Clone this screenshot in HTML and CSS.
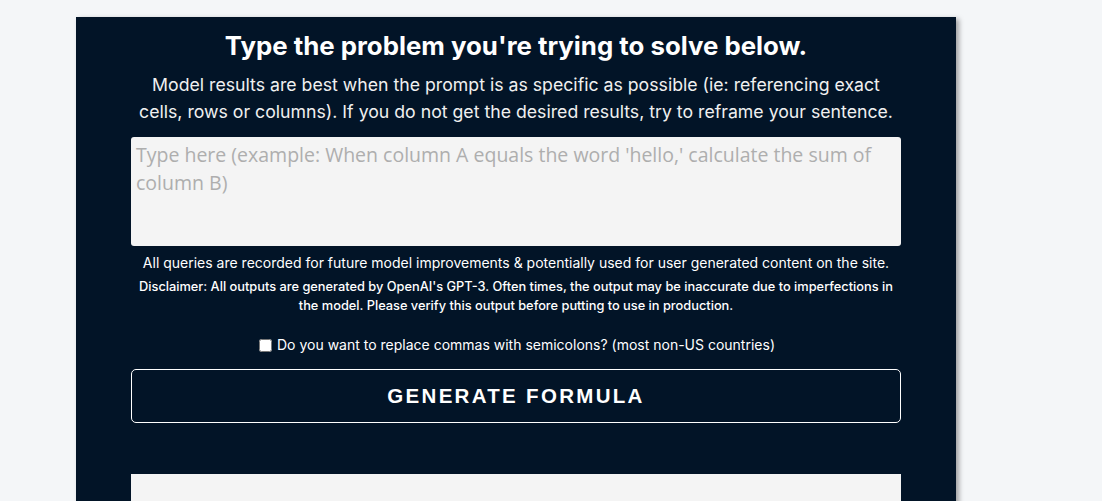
FILE: index.html
```html
<!DOCTYPE html>
<html>
<head>
<meta charset="utf-8">
<link rel="stylesheet" href="styles.css">
</head>
<body>
<main class="card">
  <h1 class="title">Type the problem you're trying to solve below.</h1>
  <p class="lead">Model results are best when the prompt is as specific as possible (ie: referencing exact cells, rows or columns). If you do not get the desired results, try to reframe your sentence.</p>
  <textarea class="prompt" placeholder="Type here (example: When column A equals the word 'hello,' calculate the sum of column B)"></textarea>
  <p class="note">All queries are recorded for future model improvements &amp; potentially used for user generated content on the site.</p>
  <p class="disclaimer">Disclaimer: All outputs are generated by OpenAI's GPT-3. Often times, the output may be inaccurate due to imperfections in the model. Please verify this output before putting to use in production.</p>
  <label class="check"><input type="checkbox" class="box"> Do you want to replace commas with semicolons? (most non-US countries)</label>
  <button class="generate">GENERATE FORMULA</button>
  <div class="output"></div>
</main>
</body>
</html>
```
FILE: styles.css
```css
html, body { margin: 0; padding: 0; }
body {
  background: #f4f6f8;
  font-family: "Inter", "Liberation Sans", sans-serif;
  height: 501px;
  overflow: hidden;
}
.card {
  margin: 17px 0 0 76px;
  width: 880px;
  height: 600px;
  box-sizing: border-box;
  padding: 14px 55px 0;
  background: #021427;
  color: #fff;
  box-shadow: 3px 2px 5px rgba(0,0,0,0.35);
  display: flex;
  flex-direction: column;
  align-items: center;
}
.title {
  margin: 0;
  font-size: 25.8px;
  font-weight: 700;
  line-height: 30px;
  text-align: center;
}
.lead {
  margin: 10px 0 0;
  max-width: 768px;
  font-size: 17.7px;
  line-height: 27px;
  text-align: center;
  color: #f0f0f0;
}
.prompt {
  margin-top: 12px;
  width: 770px;
  height: 109px;
  box-sizing: border-box;
  border: none;
  border-radius: 3px;
  background: #f4f4f4;
  padding: 4px 5px;
  font-family: "Open Sans", "Liberation Sans", sans-serif;
  font-size: 19.5px;
  line-height: 28px;
  resize: none;
}
.prompt::placeholder { color: #aeaeae; }
.note {
  margin: 8px 0 0;
  font-size: 14px;
  line-height: 18px;
  text-align: center;
}
.disclaimer {
  margin: 5px 0 0;
  font-size: 12.8px;
  font-weight: 500;
  line-height: 19px;
  text-align: center;
  width: 770px;
}
.check {
  margin-top: 20px;
  font-size: 14px;
  line-height: 20px;
  display: flex;
  align-items: center;
  gap: 5px;
}
.box { margin: 0 0 0 2px; width: 13px; height: 13px; }
.generate {
  margin-top: 14px;
  width: 770px;
  height: 54px;
  background: transparent;
  border: 1px solid #fff;
  border-radius: 5px;
  color: #fff;
  font-family: "Liberation Sans", sans-serif;
  font-size: 20.5px;
  font-weight: 700;
  letter-spacing: 2.3px;
}
.output {
  margin-top: 51px;
  width: 770px;
  height: 100px;
  background: #f4f4f4;
}
```
